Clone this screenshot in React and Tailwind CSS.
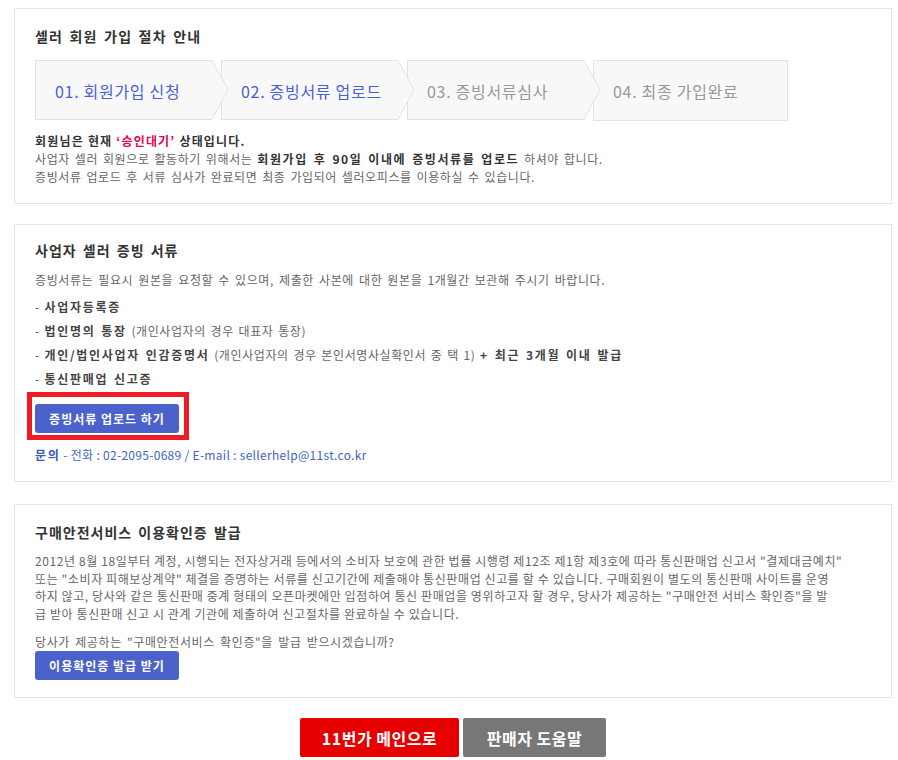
import React from 'react'

const steps = [
  { label: '01. 회원가입 신청', active: true, z: 'z-40' },
  { label: '02. 증빙서류 업로드', active: true, z: 'z-30' },
  { label: '03. 증빙서류심사', active: false, z: 'z-20' },
  { label: '04. 최종 가입완료', active: false, z: 'z-10', last: true },
]

function Step({ step }) {
  return (
    <div className={`relative w-[186px] h-[60px] shrink-0 flex items-center ${step.z}`}>
      {step.last ? (
        <svg className="absolute left-0 top-0" width="196" height="62">
          <rect x="0.5" y="0.5" width="194" height="60" fill="#f8f8f8" stroke="#e2e2e2" />
        </svg>
      ) : (
        <svg className="absolute left-0 top-0" width="195" height="60">
          <polygon points="0.5,0.5 177,0.5 193,29.5 177,59.5 0.5,59.5" fill="#f8f8f8" stroke="#e2e2e2" />
        </svg>
      )}
      <span className={`relative pl-[20px] pt-[2px] text-[16px] tracking-[0.7px] whitespace-nowrap ${step.active ? 'text-[#4a5fd6]' : 'text-[#999]'}`}>
        {step.label}
      </span>
    </div>
  )
}

function App() {
  return (
    <div className="min-h-screen bg-white font-['Noto_Sans_CJK_KR','Noto_Sans',sans-serif] text-[12px] text-[#666] tracking-[0.6px]">
      <div className="ml-[14px] w-[878px] pt-[8px]">
        {/* 가입 절차 */}
        <section className="border border-[#e5e5e5] px-[20px] pt-[17px] pb-[17px]">
          <h2 className="text-[14px] leading-[20px] font-bold text-[#333] tracking-[1.2px] [word-spacing:2px]">셀러 회원 가입 절차 안내</h2>
          <div className="flex mt-[14px] h-[61px]">
            {steps.map((s) => (
              <Step key={s.label} step={s} />
            ))}
          </div>
          <div className="mt-[11px] leading-[18px] whitespace-nowrap">
            <p className="font-bold text-[#333] tracking-[1.2px]">
              회원님은 현재 <span className="text-[#e6004f]">‘승인대기’</span> 상태입니다.
            </p>
            <p className="[word-spacing:1.6px]">
              사업자 셀러 회원으로 활동하기 위해서는 <b className="text-[#333] tracking-[1.6px]">회원가입 후 90일 이내에 증빙서류를 업로드</b> 하셔야 합니다.
            </p>
            <p className="[word-spacing:1.6px]">증빙서류 업로드 후 서류 심사가 완료되면 최종 가입되어 셀러오피스를 이용하실 수 있습니다.</p>
          </div>
        </section>

        {/* 증빙 서류 */}
        <section className="mt-[20px] border border-[#e5e5e5] px-[20px] pt-[15px] pb-[17px]">
          <h2 className="text-[14px] leading-[20px] font-bold text-[#333] tracking-[1px] [word-spacing:2px]">사업자 셀러 증빙 서류</h2>
          <p className="mt-[11px] leading-[18px] whitespace-nowrap [word-spacing:1.8px]">
            증빙서류는 필요시 원본을 요청할 수 있으며, 제출한 사본에 대한 원본을 1개월간 보관해 주시기 바랍니다.
          </p>
          <ul className="mt-[6px] leading-[24px] whitespace-nowrap [word-spacing:1.4px]">
            <li>- <b className="text-[#444] tracking-[1.7px]">사업자등록증</b></li>
            <li>- <b className="text-[#444] tracking-[1.7px]">법인명의 통장</b> (개인사업자의 경우 대표자 통장)</li>
            <li>
              - <b className="text-[#444] tracking-[1.7px]">개인/법인사업자 인감증명서</b> (개인사업자의 경우 본인서명사실확인서 중 택 1){' '}
              <b className="text-[#444] tracking-[1.7px]">+ 최근 3개월 이내 발급</b>
            </li>
            <li>- <b className="text-[#444] tracking-[1.7px]">통신판매업 신고증</b></li>
          </ul>
          <div className="relative mt-[13px] w-[144px]">
            <button className="w-[144px] h-[29px] rounded-[3px] bg-[#4a62c9] text-white font-bold text-[12px] tracking-[1px]">
              증빙서류 업로드 하기
            </button>
            <div className="absolute left-[-8px] top-[-12px] w-[162px] h-[48px] border-[5px] border-[#ee1c25] pointer-events-none" />
          </div>
          <p className="mt-[13px] leading-[18px] text-[#4464c4] tracking-[0.3px]">
            <b className="text-[#3a58b8] tracking-[1.6px]">문의</b> - 전화 : 02-2095-0689 / E-mail : sellerhelp@11st.co.kr
          </p>
        </section>

        {/* 구매안전서비스 */}
        <section className="mt-[22px] border border-[#e5e5e5] px-[20px] pt-[17px] pb-[17px]">
          <h2 className="text-[14px] leading-[20px] font-bold text-[#333] tracking-[1px] [word-spacing:2px]">구매안전서비스 이용확인증 발급</h2>
          <p className="mt-[10px] leading-[17.5px] whitespace-nowrap">
            2012년 8월 18일부터 계정, 시행되는 전자상거래 등에서의 소비자 보호에 관한 법률 시행령 제12조 제1항 제3호에 따라 통신판매업 신고서 "결제대금예치"
            <br />
            또는 "소비자 피해보상계약" 체결을 증명하는 서류를 신고기간에 제출해야 통신판매업 신고를 할 수 있습니다. 구매회원이 별도의 통신판매 사이트를 운영
            <br />
            하지 않고, 당사와 같은 통신판매 중계 형태의 오픈마켓에만 입점하여 통신 판매업을 영위하고자 할 경우, 당사가 제공하는 "구매안전 서비스 확인증"을 발
            <br />
            급 받아 통신판매 신고 시 관계 기관에 제출하여 신고절차를 완료하실 수 있습니다.
          </p>
          <p className="mt-[11px] leading-[18px] [word-spacing:2px]">당사가 제공하는 "구매안전서비스 확인증"을 발급 받으시겠습니까?</p>
          <button className="w-[144px] h-[29px] rounded-[3px] bg-[#4a62c9] text-white font-bold text-[12px] tracking-[1px]">
            이용확인증 발급 받기
          </button>
        </section>

        {/* 하단 버튼 */}
        <div className="mt-[20px] flex justify-center gap-[4px]">
          <button className="w-[159px] h-[39px] rounded-[2px] bg-[#e60000] text-white text-[16px] font-bold tracking-[0.5px]">
            11번가 메인으로
          </button>
          <button className="w-[143px] h-[39px] rounded-[2px] bg-[#777] text-white text-[16px] font-bold tracking-[0.5px]">
            판매자 도움말
          </button>
        </div>
      </div>
    </div>
  )
}

export default App
